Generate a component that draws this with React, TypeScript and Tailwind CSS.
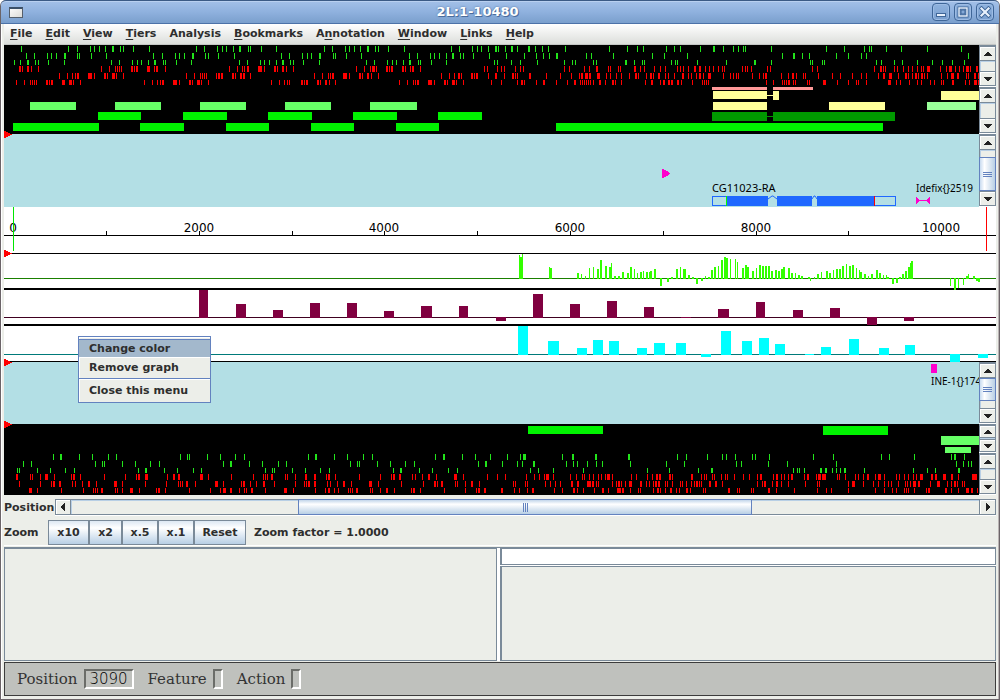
import type { ReactNode } from "react";

const INK = "fill-black";

/* Tick positions along the sequence; "x" is one pixel wide, "x:w" is w wide. */
type TickRow = { y: number; h: number; color: string; ticks: string };

const GREEN = "#22e41b";
const RED = "#ff0000";

const forwardTicks: TickRow[] = [
  { y: 46, h: 6, color: GREEN, ticks: "21 68 77 90 94 99 105 112:2 120 123 133 149 196 204 217 222 226 233 239:2 248 250 261 276 324 332 345 349 354 360 367:2 375 378 388 404 451 459 472 477 481 488 495:2 498 505 511:2 517 528:2 535 542 548 565 609 627 637 643 666 674 680 700 713:2 723 733 738 743 745 771 826 844 864 869 871 886 901 927 961" },
  { y: 53, h: 6, color: GREEN, ticks: "26 34 47 51 56 64:2 77 79 91 106 153 162 175 179 184 192:2 205 208 218 234 281 289 302 307 311 319:2 333 335 346 361 409 417 430 434 439 446 452:2 460 463 473 489 506 524 536 543 549 556:2 586 591 613 652 664 687 782 793:2 802 809 836 848 861 866 968" },
  { y: 60, h: 5, color: GREEN, ticks: "14 20 27:2 35 38 48 64 111 119 132 137 141 148 154:2 163 165 176 191 239 247 260 264 269 276 282:2 290 293 303 319 366 374 387 392 396 403 409:2 418 420 431 446 494 497 511 520 537 564 572 575 593 596 625:2 634 642 644 671 675 677 697 726 754:2 771 810 812 822 824 876 881 894 902 917 932 942 952 964" },
  { y: 66, h: 6, color: RED, ticks: "19:2 22 27:2 31 38 101 109 115 117 119 121 131:2 134 136:2 147:3 154 156:2 165 229 237 242 244 247:2 258:4 264 274:2 277 282:2 286 293 356 364 370 372:3 376 386:2 389 391:2 402:2 405 410 412:2 420 484 487 497 501 504 515 520 523 564 569 584 589 596:2 608 610 618 620 634:2 640 644 654 660 665 677 680 683 688 694:2 699:2 705 709 713 718 722 724 742 745 747 751 767 770 812 817 874 880:2 883 885 894 897 903 908 912 917 921 923 927:2 929 940 946 949:3 955 959 963 966:3 970 976:2" },
  { y: 73, h: 6, color: RED, ticks: "59 67 72 75 77:2 88:4 94 104:2 107 112:3 116 123 186 194 200 202 204 206 216 218:2 221:2 232:2 235 240:2 243:2 250 314 322 328 330 332:2 343:4 349 359:2 362 367:2 371 378 441 449 454 458:2 461 471:2 474 476:2 488 495:2 504 512:2 515 517 529:2 546 560 571 579 581:2 585:3 589:2 597:3 606 610 616 621 629 635:2 638 646 650:2 653 658:2 665 668 674 682:2 688 691 696 699:2 703 708:3 723 730 733 736 738 752 759 763 765:2 781 788 792:2 796 803 805 818 832 840 852 861 866 878 883:2 889:3 898 905:2 908 912 915:2 918 921:2 924 927 941 947 951:3 957:2 966 968 974:2 978" },
  { y: 80, h: 5, color: RED, ticks: "16 24 30 32 34 36 46:2 49 51:2 62:3 69:3 73 80 144 152 157 160 162:2 173:4 179 189:2 192 197:3 201 208 271 279 284 287 289 301:2 304 306:2 317:2 320 325:2 329 335 399 407 413 415 417:2 428:4 434 444:2 447 452:3 456 463 491 501 517 521:2 524 536 543:2 556 567 574:2 580 582 584 586 588 590 593 599:2 605 612:2 615 621 645 651:2 660 663:2 668:2 671:2 677:2 681 692 702 704 706 708 766 773 782 784 786 788:2 793 795 807 809 823:3 837 848 856 858 866 888:3 896 900 909 917 921 930 934 941 943 952:2 965 969 974:3 978" },
];

const reverseTicks: TickRow[] = [
  { y: 454, h: 6, color: GREEN, ticks: "53 60:2 79 92 108 116 180 187 189 207 220 235 244 308 315:2 334 347 363 372 435 443:2 462 475 490 507 520 523:3 562 572:2 595:2 628:2 677 686 707 722 726 735 752 755 769 813 833 881 889 914 951 954:2 964" },
  { y: 461, h: 6, color: GREEN, ticks: "23 31 95 102 104 122 135 150 159 223 230:2 249 262 278 286 350 357 359 377 390 405 414 478 485:2 502 517 522 533:2 566 573 577 587 596 602 630 666 684 736 741 768 787 836 956 963 968 971" },
  { y: 468, h: 5, color: GREEN, ticks: "17 19 37 50 65 74 138 145:2 164 177 193 201 265 272 274 292 305 320 329 393 400:2 419 432 448 457 530 538 553 583 647 669 698 711:2 793 797 799 804 820:2 825:2 832 836 840 844:2 864 913 927 935 958:2" },
  { y: 474, h: 6, color: RED, ticks: "16:2 30 32 40 45:3 54 71 73:2 80 104 125 136 138:2 145:3 167 173:2 178:2 200:3 208 231 253 263 265 267 271:2 285 287 295 305:2 314:2 326 328:2 335 359 380 391 393:2 399:2 412 415 422 428:2 436 454:3 463 487 497 505 526 534 539 544 546:3 553 570 576 582 584 589 593 598 601 605 607:3 612 631 636 647 652 656:2 659:2 669:2 672 691:2 701 704 706 712 714 721 725 727 734 743 749 757 760:2 773 776:2 781 784 788 791:2 804 807:2 816 818:3 822:4 837 839 845 855 858 863 867:2 875 878:3 884 896 899 904 908 913 916 920:3 931:2 935:2 943:3 951:2 958 972:5" },
  { y: 481, h: 6, color: RED, ticks: "19 40 51 53:2 59:2 72 75 82 88:2 96 114:3 122 145 166 178 180 182 186:2 195 215:3 223 241 243:2 250 256 263:2 274 295 304 306 308:2 314:2 327 330 337 343:2 351 369:3 378 401 423 434:2 437 441:2 455 457 465 471:2 479 513 515 525 527 545 550 555 560 571:2 577:2 587:4 592:2 596 598 612 616 618:2 621 625 629:3 640:2 646 649 653 655:2 658:2 665 667 672 680 682 686 691 694 696:2 699 701 709:2 715:2 722 757 762 764:2 772 776:2 781 788 805 817 819 848 852:3 863 873 878 884 888 891 898 905 907 910 913:3 918:2 930 937:3 947 951 954:2 957 962 964" },
  { y: 488, h: 5, color: RED, ticks: "29:3 37 61 83 93 95 97 101:2 115 117 122 130:3 139 156 158:2 165 189 210 220 223:3 230:2 239 244 246 251:2 265 284:3 293 315 325 328:2 334 338 348 350 352 356:2 370 372 380 386:2 394 411 413:2 420 444 465 476 478:2 484:2 501:2 514 519 527 532:2 554 562 573:2 577 583 594 602:2 608 617:4 622:2 630 638 640 653 657:2 660 665 670:2 676 679 686:2 690 703 705 728:2 737 739 751 753 768:2 776 794 817 826 831 848 875 884 892 896 904 906 908 914 926 928:2 945:2 951 958 966:3 971:2 977" },
];

type Box = [x: number, y: number, w: number, h: number, color: string];

const LIME = "#00f300";
const LIGHT = "#66ff66";
const YELLOW = "#ffff99";
const DARK = "#009900";
const PINK = "#ff9999";

const forwardFeatures: Box[] = [
  [30, 102, 46, 8, LIGHT], [115, 102, 46, 8, LIGHT], [200, 102, 46, 8, LIGHT], [285, 102, 46, 8, LIGHT], [370, 102, 47, 8, LIGHT],
  [98, 112, 43, 8, LIME], [183, 112, 44, 8, LIME], [268, 112, 44, 8, LIME], [353, 112, 44, 8, LIME], [438, 112, 44, 8, LIME],
  [13, 123, 86, 8, LIME], [140, 123, 44, 8, LIME], [226, 123, 43, 8, LIME], [311, 123, 43, 8, LIME], [396, 123, 43, 8, LIME], [556, 123, 327, 8, LIME],
  [712, 87, 55, 3, PINK], [773, 87, 40, 3, PINK],
  [713, 91, 54, 8, YELLOW], [767, 95, 6, 1, YELLOW], [773, 91, 6, 9, YELLOW], [941, 91, 38, 9, YELLOW],
  [713, 102, 54, 8, YELLOW], [829, 102, 56, 8, YELLOW], [927, 102, 49, 8, "#99ff99"],
  [712, 112, 55, 9, DARK], [767, 116, 6, 1, DARK], [773, 112, 122, 9, DARK],
];

const reverseFeatures: Box[] = [
  [528, 426, 75, 8, LIME], [823, 426, 65, 9, LIME],
  [941, 436, 38, 9, LIGHT], [945, 447, 26, 6, LIGHT],
];

/* Graph bars: x, width, height above (or below, if negative) the base line. */
const greenGraph =
  "519,1,24 520,2,22 522,1,25 549,1,12 550,2,11 577,2,6 581,1,5 585,1,3 589,1,11 593,1,12 597,2,10 600,2,19 605,2,13 609,2,12 611,1,16 614,2,3 618,2,3 622,2,7 627,2,6 630,2,12 634,1,10 637,1,6 640,2,7 643,1,8 646,2,7 649,1,7 650,2,8 654,2,10 660,2,-7 667,2,-3 671,2,2 676,2,10 680,1,12 683,3,10 688,2,4 692,2,2 696,2,-5 701,2,-2 705,1,3 708,2,2 711,2,9 714,2,12 718,1,13 721,2,19 724,2,22 726,2,21 730,1,20 735,1,20 737,1,17 742,2,11 745,2,14 747,2,12 752,2,8 756,1,11 759,2,14 762,2,13 765,2,13 768,2,13 771,2,8 775,2,9 778,2,8 781,2,10 783,2,12 788,2,11 791,2,6 795,1,6 798,2,4 801,2,3 808,2,2 810,1,-2 814,1,2 817,2,5 821,1,7 826,2,8 829,2,6 833,1,9 836,2,10 839,2,10 842,2,13 846,1,15 849,2,13 852,2,14 856,1,11 859,1,9 860,2,7 864,2,5 868,1,3 871,2,5 876,2,9 879,2,6 883,1,4 886,1,4 887,2,2 892,2,-5 896,2,-4 899,2,2 902,2,5 905,2,8 908,2,12 910,1,16 911,2,18 950,1,-7 954,2,-11 958,1,-9 963,1,-6 966,2,3 968,1,5 973,2,3 976,2,-2 978,2,-3";
const maroonGraph =
  "199,9,28 236,10,14 273,10,8 310,10,15 347,10,15 384,10,7 421,11,12 459,9,12 496,10,-3 533,10,24 570,10,14 607,10,17 644,10,11 681,10,1 718,11,9 756,9,16 793,10,8 830,10,10 867,10,-7 904,10,-3";
const cyanGraph =
  "518,10,29 548,11,14 577,10,7 593,10,15 609,10,14 637,10,7 654,11,12 676,10,12 701,10,-2 721,10,24 742,10,14 759,10,17 775,10,11 805,9,1 821,10,8 849,10,16 879,10,7 905,10,10 950,10,-7 978,10,-3";

function Ticks({ rows }: { rows: TickRow[] }) {
  return (
    <>
      {rows.map((r) => (
        <g key={r.y} fill={r.color}>
          {r.ticks.split(" ").map((t) => {
            const [x, w = "1"] = t.split(":");
            return <rect key={x} x={x} y={r.y} width={w} height={r.h} />;
          })}
        </g>
      ))}
    </>
  );
}

function Boxes({ items }: { items: Box[] }) {
  return (
    <>
      {items.map(([x, y, w, h, c]) => (
        <rect key={`${x}-${y}`} x={x} y={y} width={w} height={h} fill={c} />
      ))}
    </>
  );
}

function Graph({ bars, base, color, axis }: { bars: string; base: number; color: string; axis: string }) {
  return (
    <g fill={color}>
      <rect x="4" y={base} width="100%" height="1" fill={axis} />
      {bars.split(" ").map((b) => {
        const [x, w, h] = b.split(",").map(Number);
        return <rect key={x} x={x} y={h > 0 ? base + 1 - h : base} width={w} height={Math.abs(h) + (h < 0 ? 1 : 0)} />;
      })}
    </g>
  );
}

/* A strip of the sequence map; children are drawn in window coordinates. */
function Strip({ top, className, marker, children }: { top: number; className: string; marker?: number; children?: ReactNode }) {
  return (
    <svg className={`block min-w-0 flex-1 overflow-visible ${className}`} shapeRendering="crispEdges">
      <g transform={`translate(-4 ${-top})`}>
        {children}
        {marker !== undefined && <path d={`M4 ${marker - 3}h2v1h2v1h2v1h2v1h-2v1h-2v1h-2v1h-2z`} fill="#ff0000" />}
      </g>
    </svg>
  );
}

type Dir = "up" | "down" | "left" | "right";

const arrows: Record<Dir, string> = {
  up: "M3 0h2v1h1v1h1v1h1v1H0v-1h1v-1h1v-1h1z",
  down: "M0 0h8v1h-1v1h-1v1h-1v1h-2v-1h-1v-1h-1v-1h-1z",
  left: "M4 0v8h-1v-1h-1v-1h-1v-1H0v-2h1v-1h1v-1h1v-1z",
  right: "M0 0v8h1v-1h1v-1h1v-1h1v-2h-1v-1h-1v-1h-1v-1z",
};

function ArrowButton({ dir, className }: { dir: Dir; className: string }) {
  const vertical = dir === "up" || dir === "down";
  return (
    <button
      aria-label={`Scroll ${dir}`}
      className={`flex shrink-0 items-center justify-center border border-[#7a8a99] bg-[#eceee9] shadow-[inset_1px_1px_0_#ffffff] ${className}`}
    >
      <svg className={vertical ? "h-1 w-2" : "h-2 w-1"} shapeRendering="crispEdges">
        <path d={arrows[dir]} fill="#222222" />
      </svg>
    </button>
  );
}

function VScroll({ className, button = "h-[15px]", children }: { className: string; button?: string; children?: ReactNode }) {
  return (
    <div className={`flex w-[17px] shrink-0 flex-col border-t border-b border-t-[#7a8a99] border-b-white bg-[#eceee9] ${className}`}>
      <ArrowButton dir="up" className={`${button} w-[17px]`} />
      <div className="flex min-h-0 flex-1 flex-col border-x border-[#7a8a99] bg-[#eceee9] shadow-[inset_1px_1px_0_#b8cfe5]">{children}</div>
      <ArrowButton dir="down" className={`${button} w-[17px]`} />
    </div>
  );
}

function VThumb({ className }: { className: string }) {
  return (
    <div className={`-mx-px flex flex-col items-center justify-center gap-px border border-[#6382bf] bg-linear-to-r from-[#c8dbf0] via-white via-30% to-[#b8cfe5] ${className}`}>
      <span className="h-px w-[9px] bg-[#6382bf]" />
      <span className="h-px w-[9px] bg-[#6382bf]" />
      <span className="h-px w-[9px] bg-[#6382bf]" />
    </div>
  );
}

const menus: [string, string, string][] = [
  ["", "F", "ile"], ["", "E", "dit"], ["", "V", "iew"], ["", "T", "iers"], ["Analysis", "", ""],
  ["", "B", "ookmarks"], ["A", "n", "notation"], ["", "W", "indow"], ["", "L", "inks"], ["", "H", "elp"],
];

function TitleButton({ label, children }: { label: string; children: ReactNode }) {
  return (
    <button
      aria-label={label}
      className="flex size-[18px] items-center justify-center rounded-[4px] border border-[#3f6698] bg-linear-to-b from-[#8fb2de] to-[#7a9fce] shadow-[inset_0_0_0_1px_#9dbce4]"
    >
      <svg className="size-3" viewBox="0 0 12 12">{children}</svg>
    </button>
  );
}

function TitleBar() {
  return (
    <header className="flex h-6 shrink-0 items-center gap-1 rounded-t-[5px] border-t border-b border-t-[#3b5a85] border-b-[#4c72a8] bg-linear-to-b from-[#a3c0e8] via-[#8fb1de] to-[#7a9fcd] pr-[5px] pl-2 shadow-[inset_0_1px_0_#b9d0f0]">
      <span className="h-[11px] w-[14px] border border-t-2 border-[#555f6b] border-t-[#3b5069] bg-linear-to-br from-[#fafafa] to-[#dcdcd8]" />
      <h1 className="flex-1 text-center text-[13px] leading-5 font-bold text-white [text-shadow:1px_1px_0_#4a6c9c,0_0_2px_#4a6c9c]">2L:1-10480</h1>
      <TitleButton label="Minimize">
        <rect x="1.5" y="7.5" width="9" height="3" fill="#e8f1fc" stroke="#3f6698" />
      </TitleButton>
      <TitleButton label="Maximize">
        <rect x="2" y="2" width="8" height="8" fill="none" stroke="#3f6698" strokeWidth="3" />
        <rect x="2" y="2" width="8" height="8" fill="none" stroke="#e8f1fc" strokeWidth="1.4" />
        <rect x="4" y="4" width="4" height="4" fill="none" stroke="#3f6698" />
      </TitleButton>
      <TitleButton label="Close">
        <path d="M2.5 2.5l7 7M9.5 2.5l-7 7" stroke="#3f6698" strokeWidth="4" strokeLinecap="square" />
        <path d="M2.5 2.5l7 7M9.5 2.5l-7 7" stroke="#e8f1fc" strokeWidth="2.2" strokeLinecap="square" />
      </TitleButton>
    </header>
  );
}

function MenuBar() {
  return (
    <nav className="flex h-[21px] shrink-0 items-center gap-[13px] border-b border-[#c4c6c4] bg-linear-to-b from-white to-[#dcdedb] px-1.5 leading-4">
      {menus.map(([pre, key, post]) => (
        <button key={pre + key + post} className="whitespace-nowrap">
          {pre}
          <span className="underline underline-offset-2">{key}</span>
          {post}
        </button>
      ))}
    </nav>
  );
}

function GeneModel() {
  const blue = "#1f68ff";
  return (
    <g>
      <path d="M662 169h2v1h2v1h2v1h1v1h1v1h-1v1h-1v1h-2v1h-2v1h-2z" fill="#ff00cc" />
      <text x="712" y="192" className={`text-[11px] ${INK}`}>CG11023-RA</text>
      <rect x="712.5" y="196.5" width="15" height="9" fill="none" stroke={blue} />
      <rect x="874.5" y="196.5" width="21" height="9" fill="none" stroke={blue} />
      <rect x="727" y="196" width="41" height="10" fill={blue} />
      <rect x="777" y="196" width="35" height="10" fill={blue} />
      <rect x="817" y="196" width="57" height="10" fill={blue} />
      <path d="M768 199l4-3h1l4 3M812 199l2-3h1l2 3" fill="none" stroke={blue} shapeRendering="auto" />
      <rect x="726" y="196" width="1" height="10" fill="#00ff00" />
      <rect x="874" y="196" width="1" height="10" fill="#ff0000" />
      <text x="916" y="192" className={`text-[10px] ${INK}`}>{"Idefix{}2519"}</text>
      <path d="M916 197h1v1h1v1h1v1h8v-1h1v-1h1v-1h1v7h-1v-1h-1v-1h-1v-1h-8v1h-1v1h-1v1h-1z" fill="#ff00cc" />
    </g>
  );
}

function Ruler() {
  const step = [13, 106, 199, 292, 384, 477, 570, 663, 756, 848, 941];
  return (
    <g>
      <rect x="4" y="235" width="100%" height="1" />
      {step.map((x, i) => (
        <g key={x}>
          <rect x={x} y="231" width="1" height="5" />
          {i % 2 === 0 && (
            <text x={x} y="232" textAnchor="middle" className="fill-black font-['DejaVu_Sans',sans-serif] text-[12px]">
              {i * 1000}
            </text>
          )}
        </g>
      ))}
      <rect x="13" y="207" width="1" height="44" fill="#00e600" />
      <rect x="986" y="207" width="1" height="44" fill="#ff0000" />
    </g>
  );
}

function PopupMenu() {
  return (
    <div role="menu" className="absolute top-[291px] left-[74px] flex w-[133px] flex-col border border-[#6382bf] bg-[#eceee9] pt-0.5 leading-4 shadow-[inset_1px_1px_0_#ffffff]">
      <button role="menuitem" className="h-[19px] border-t border-b border-t-[#6382bf] border-b-white bg-[#a3b8cc] pl-2.5 text-left">Change color</button>
      <button role="menuitem" className="h-5 pl-2.5 text-left">Remove graph</button>
      <button role="menuitem" className="h-6 border-t border-[#6382bf] pl-2.5 text-left shadow-[inset_0_1px_0_#ffffff]">Close this menu</button>
    </div>
  );
}

function SequenceMap() {
  return (
    <main className="relative shrink-0 overflow-hidden font-['Noto_Sans',sans-serif] font-normal">
      <div className="flex">
        <Strip top={45} className="h-[89px] bg-black">
          <Ticks rows={forwardTicks} />
          <Boxes items={forwardFeatures} />
        </Strip>
        <div className="flex flex-col">
          <VScroll className="h-[42px]" />
          <VScroll className="h-[47px]" />
        </div>
      </div>
      <div className="flex">
        <Strip top={134} className="h-[73px] bg-[#b3dfe5]" marker={134}>
          <GeneModel />
        </Strip>
        <VScroll className="h-[73px]">
          <VThumb className="mt-[7px] h-[34px]" />
        </VScroll>
      </div>
      <div className="flex">
        <Strip top={207} className="h-[155px] bg-white" marker={253}>
          <Ruler />
          <rect x="4" y="253" width="100%" height="1" />
          <rect x="4" y="288" width="100%" height="2" />
          <rect x="4" y="324" width="100%" height="2" />
          <rect x="4" y="361" width="100%" height="1" />
          <Graph bars={greenGraph} base={278} color="#33ff00" axis="#1a8000" />
          <Graph bars={maroonGraph} base={317} color="#800040" axis="#400020" />
          <Graph bars={cyanGraph} base={354} color="#00ffff" axis="#007a7a" />
        </Strip>
      </div>
      <div className="flex">
        <Strip top={362} className="h-[62px] bg-[#b3dfe5]" marker={362}>
          <rect x="931" y="364" width="6" height="9" fill="#ff00cc" />
          <text x="931" y="385" className={`text-[10px] ${INK}`}>{"INE-1{}174"}</text>
        </Strip>
        <VScroll className="relative h-[62px]">
          <VThumb className="h-[23px]" />
        </VScroll>
      </div>
      <div className="flex">
        <Strip top={424} className="h-[71px] bg-black" marker={424}>
          <Boxes items={reverseFeatures} />
          <Ticks rows={reverseTicks} />
        </Strip>
        <div className="flex flex-col">
          <VScroll className="h-[29px]" button="h-[13px]" />
          <VScroll className="h-[42px]" />
        </div>
      </div>
      <div className="font-['DejaVu_Sans',sans-serif] font-bold">
        <PopupMenu />
      </div>
    </main>
  );
}

function PositionBar() {
  return (
    <div className="flex h-[25px] shrink-0 items-center leading-4">
      <span className="w-[51px] shrink-0 whitespace-nowrap">Position</span>
      <div className="flex h-[17px] min-w-0 flex-1 border-b border-white">
        <ArrowButton dir="left" className="h-4 w-4" />
        <div className="flex h-4 min-w-0 flex-1 border-y border-[#7a8a99] shadow-[inset_1px_1px_0_#b8cfe5]">
          <div className="-my-px ml-[25%] flex w-1/2 items-center justify-center gap-px border border-[#6382bf] bg-linear-to-b from-[#c3d6ea] via-white via-30% to-[#b8cfe5]">
            <span className="h-[9px] w-px bg-[#6382bf]" />
            <span className="h-[9px] w-px bg-[#6382bf]" />
            <span className="h-[9px] w-px bg-[#6382bf]" />
          </div>
        </div>
        <ArrowButton dir="right" className="h-4 w-[17px]" />
      </div>
    </div>
  );
}

function ZoomButton({ className, children }: { className: string; children: ReactNode }) {
  return (
    <button className={`h-[25px] border border-[#7a8a99] bg-linear-to-b from-[#dde8f3] via-white via-30% to-[#b8cfe5] ${className}`}>
      {children}
    </button>
  );
}

function ZoomBar() {
  return (
    <div className="flex h-[25px] shrink-0 items-center leading-4">
      <span className="w-11 shrink-0">Zoom</span>
      <ZoomButton className="w-[41px]">x10</ZoomButton>
      <ZoomButton className="w-[33px]">x2</ZoomButton>
      <ZoomButton className="w-9">x.5</ZoomButton>
      <ZoomButton className="w-9">x.1</ZoomButton>
      <ZoomButton className="w-[52px]">Reset</ZoomButton>
      <span className="pl-2 whitespace-nowrap">Zoom factor = 1.0000</span>
    </div>
  );
}

function DetailPanes() {
  return (
    <section className="flex min-h-[60px] flex-1 flex-col border-t border-white">
      <div className="mt-px flex flex-1 gap-[3px] border-t border-[#7a8a99] bg-white">
        <div className="w-[49.7%] shrink-0 border border-[#7a8a99] bg-[#eceee9]" />
        <div className="flex flex-1 flex-col gap-px">
          <input aria-label="Selection" className="h-[17px] w-full border border-l-2 border-[#7a8a99] bg-white px-1 outline-none" />
          <div className="flex-1 border border-l-2 border-[#7a8a99] bg-[#eceee9]" />
        </div>
      </div>
    </section>
  );
}

function StatusField({ id, label, value, width }: { id: string; label: string; value: string; width: string }) {
  return (
    <div className="flex items-center gap-1.5">
      <label htmlFor={id}>{label}</label>
      <input
        id={id}
        readOnly
        value={value}
        className={`h-5 border-2 border-t-[#6b6d69] border-r-white border-b-white border-l-[#6b6d69] bg-transparent text-center font-['DejaVu_Sans',sans-serif] font-extralight text-black outline-none ${width}`}
      />
    </div>
  );
}

function StatusBar() {
  return (
    <footer className="mt-px flex h-[34px] shrink-0 items-center gap-3.5 border border-[#3c3c3c] bg-[#bfc1bd] px-3 font-['DejaVu_Serif',serif] text-[15px] leading-5 font-normal text-[#333333]">
      <StatusField id="pos" label="Position" value="3090" width="w-[50px]" />
      <StatusField id="feature" label="Feature" value="" width="w-2.5" />
      <StatusField id="action" label="Action" value="" width="w-2.5" />
    </footer>
  );
}

export default function App() {
  return (
    <div className="flex min-h-screen flex-col rounded-t-[6px] border-x border-b border-[#6b6468] bg-[#eceee9] font-['DejaVu_Sans',sans-serif] text-[11px] font-bold text-[#2e2e2e]">
      <TitleBar />
      <div className="flex flex-1 flex-col bg-[#eceee9] px-[3px] pb-[3px] shadow-[inset_1px_0_0_#ffffff,inset_-1px_0_0_#b9b3b3]">
        <MenuBar />
        <SequenceMap />
        <PositionBar />
        <ZoomBar />
        <DetailPanes />
        <StatusBar />
      </div>
    </div>
  );
}
